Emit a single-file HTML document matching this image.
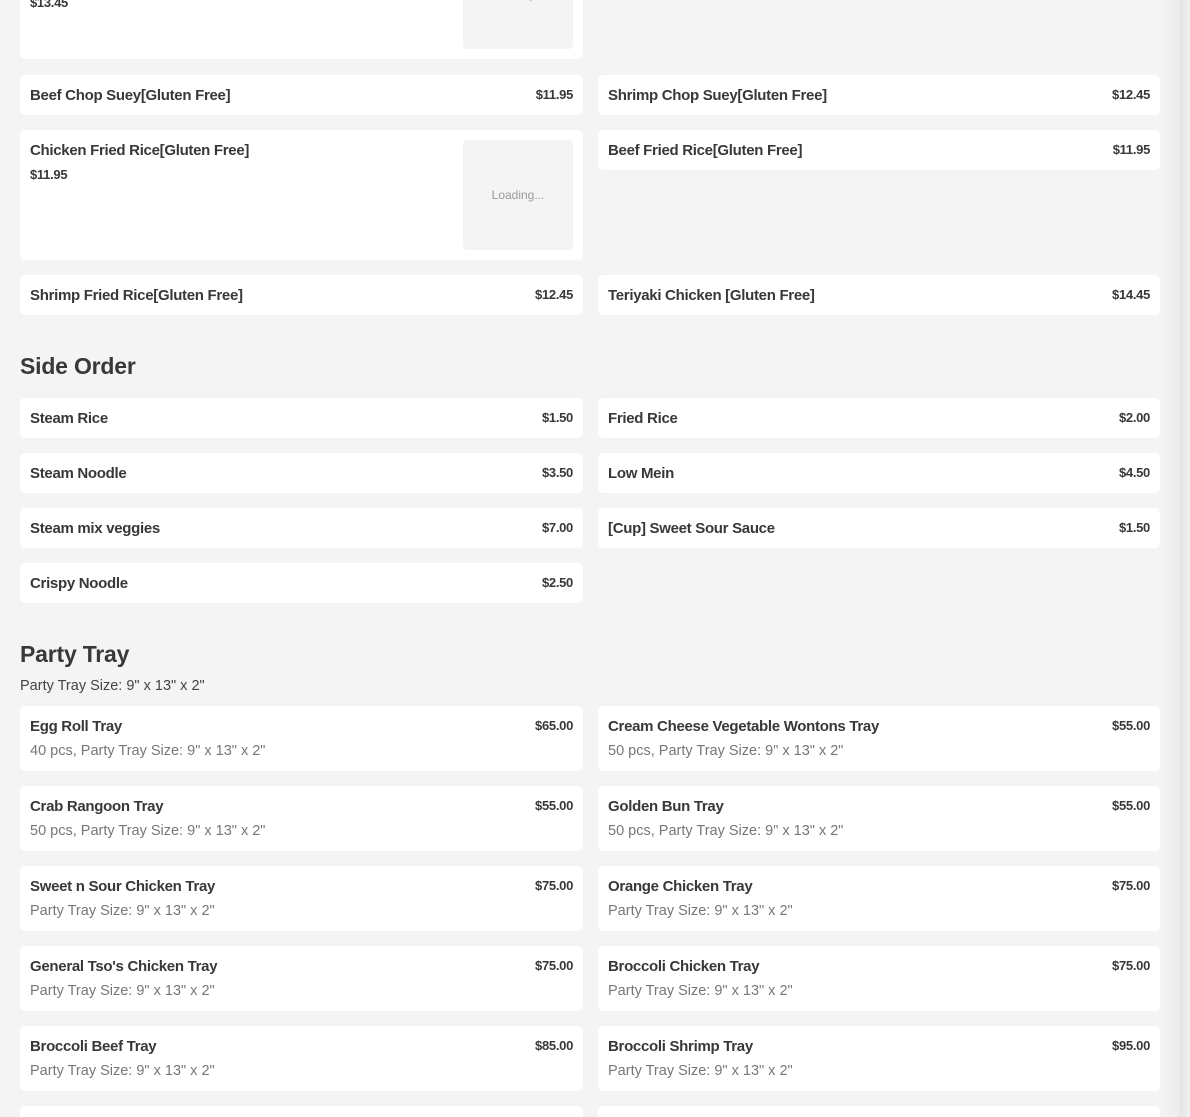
<!DOCTYPE html>
<html style="width:1190px;height:1117px;overflow:hidden"><head><meta charset="utf-8"><style>
*{margin:0;padding:0;box-sizing:border-box}
body{width:1190px;height:1117px;background:#f4f4f4;font-family:"Liberation Sans",sans-serif;color:#383838;position:relative;overflow:hidden}
.c{position:absolute;background:#fff;border-radius:5px}
.n{position:absolute;left:10px;top:11px;font-weight:bold;font-size:15px;letter-spacing:-0.3px;line-height:20px}
.p{position:absolute;right:10px;top:10px;font-weight:bold;font-size:13px;letter-spacing:-0.3px;line-height:20px}
.pl{position:absolute;left:10px;top:35px;font-weight:bold;font-size:13px;letter-spacing:-0.3px;line-height:20px}
.d{position:absolute;left:10px;top:35px;font-size:14.5px;color:#777;letter-spacing:0;line-height:20px}
.img{position:absolute;right:10px;top:10px;width:110px;height:110px;background:#f4f4f4;border-radius:4px;font-size:12px;color:#999;text-align:center;line-height:110px}
.h{position:absolute;left:20px;font-weight:bold;font-size:23px;letter-spacing:-0.2px}
.L{left:20px;width:563px}.R{left:598px;width:562px}
.sb{position:absolute;left:1162px;top:0;width:28px;height:1117px;background:linear-gradient(90deg,#f4f4f4,#ececec 64%,#e4e4e4 64%,#f0f0f0)}
</style></head><body>
<div class="c L" style="top:-71px;height:130px"><div class="pl" style="top:64px">$13.45</div><div class="img">Loading...</div></div>

<div class="c L" style="top:75px;height:40px"><div class="n">Beef Chop Suey[Gluten Free]</div><div class="p">$11.95</div></div>
<div class="c R" style="top:75px;height:40px"><div class="n">Shrimp Chop Suey[Gluten Free]</div><div class="p">$12.45</div></div>

<div class="c L" style="top:130px;height:130px"><div class="n">Chicken Fried Rice[Gluten Free]</div><div class="pl">$11.95</div><div class="img">Loading...</div></div>
<div class="c R" style="top:130px;height:40px"><div class="n">Beef Fried Rice[Gluten Free]</div><div class="p">$11.95</div></div>

<div class="c L" style="top:275px;height:40px"><div class="n">Shrimp Fried Rice[Gluten Free]</div><div class="p">$12.45</div></div>
<div class="c R" style="top:275px;height:40px"><div class="n">Teriyaki Chicken [Gluten Free]</div><div class="p">$14.45</div></div>

<div class="h" style="top:353px">Side Order</div>
<div class="c L" style="top:398px;height:40px"><div class="n">Steam Rice</div><div class="p">$1.50</div></div>
<div class="c R" style="top:398px;height:40px"><div class="n">Fried Rice</div><div class="p">$2.00</div></div>
<div class="c L" style="top:453px;height:40px"><div class="n">Steam Noodle</div><div class="p">$3.50</div></div>
<div class="c R" style="top:453px;height:40px"><div class="n">Low Mein</div><div class="p">$4.50</div></div>
<div class="c L" style="top:508px;height:40px"><div class="n">Steam mix veggies</div><div class="p">$7.00</div></div>
<div class="c R" style="top:508px;height:40px"><div class="n">[Cup] Sweet Sour Sauce</div><div class="p">$1.50</div></div>
<div class="c L" style="top:563px;height:40px"><div class="n">Crispy Noodle</div><div class="p">$2.50</div></div>

<div class="h" style="top:641px">Party Tray</div>
<div style="position:absolute;left:20px;top:676px;font-size:14.5px;color:#444;line-height:20px">Party Tray Size: 9" x 13" x 2"</div>

<div class="c L" style="top:706px;height:65px"><div class="n">Egg Roll Tray</div><div class="p">$65.00</div><div class="d">40 pcs, Party Tray Size: 9" x 13" x 2"</div></div>
<div class="c R" style="top:706px;height:65px"><div class="n">Cream Cheese Vegetable Wontons Tray</div><div class="p">$55.00</div><div class="d">50 pcs, Party Tray Size: 9" x 13" x 2"</div></div>
<div class="c L" style="top:786px;height:65px"><div class="n">Crab Rangoon Tray</div><div class="p">$55.00</div><div class="d">50 pcs, Party Tray Size: 9" x 13" x 2"</div></div>
<div class="c R" style="top:786px;height:65px"><div class="n">Golden Bun Tray</div><div class="p">$55.00</div><div class="d">50 pcs, Party Tray Size: 9" x 13" x 2"</div></div>
<div class="c L" style="top:866px;height:65px"><div class="n">Sweet n Sour Chicken Tray</div><div class="p">$75.00</div><div class="d">Party Tray Size: 9" x 13" x 2"</div></div>
<div class="c R" style="top:866px;height:65px"><div class="n">Orange Chicken Tray</div><div class="p">$75.00</div><div class="d">Party Tray Size: 9" x 13" x 2"</div></div>
<div class="c L" style="top:946px;height:65px"><div class="n">General Tso's Chicken Tray</div><div class="p">$75.00</div><div class="d">Party Tray Size: 9" x 13" x 2"</div></div>
<div class="c R" style="top:946px;height:65px"><div class="n">Broccoli Chicken Tray</div><div class="p">$75.00</div><div class="d">Party Tray Size: 9" x 13" x 2"</div></div>
<div class="c L" style="top:1026px;height:65px"><div class="n">Broccoli Beef Tray</div><div class="p">$85.00</div><div class="d">Party Tray Size: 9" x 13" x 2"</div></div>
<div class="c R" style="top:1026px;height:65px"><div class="n">Broccoli Shrimp Tray</div><div class="p">$95.00</div><div class="d">Party Tray Size: 9" x 13" x 2"</div></div>
<div class="c L" style="top:1106px;height:11px;border-radius:5px 5px 0 0"></div>
<div class="c R" style="top:1106px;height:11px;border-radius:5px 5px 0 0"></div>
<div class="sb"></div>
</body></html>
